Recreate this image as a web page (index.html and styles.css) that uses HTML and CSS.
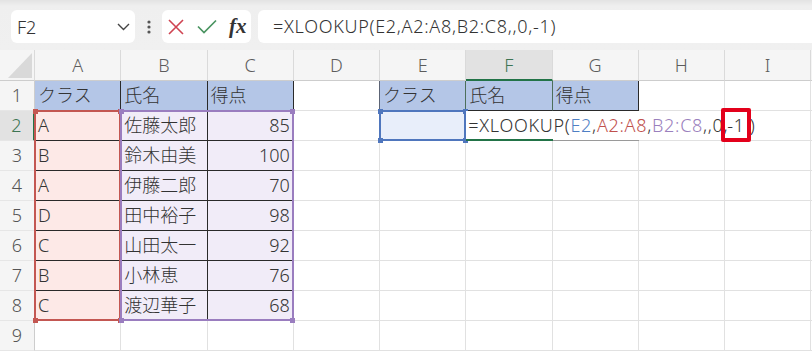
FILE: index.html
```html
<!DOCTYPE html>
<html lang="ja">
  <head>
    <meta charset="UTF-8" />
    <meta name="viewport" content="width=device-width, initial-scale=1.0" />
    <title>XLOOKUP</title>
    <link rel="stylesheet" href="styles.css">
  </head>
  <body>
    <div class="toolbar">
      <div class="namebox">
        <span>F2</span>
        <svg width="13" height="8" viewBox="0 0 13 8"><polyline points="1,1 6.5,6.5 12,1" fill="none" stroke="#444" stroke-width="1.4" /></svg>
      </div>
      <div class="dots">
        <svg width="4" height="14" viewBox="0 0 4 14"><circle cx="2" cy="2" r="1.6" fill="#555" /><circle cx="2" cy="7" r="1.6" fill="#555" /><circle cx="2" cy="12" r="1.6" fill="#555" /></svg>
      </div>
      <div class="fbtns">
        <svg width="16" height="16" viewBox="0 0 16 16"><path d="M1 1 L15 15 M15 1 L1 15" stroke="#cf4452" stroke-width="1.6" fill="none" /></svg>
        <svg width="20" height="15" viewBox="0 0 20 15"><polyline points="1,7.5 7,13.5 19,1.5" fill="none" stroke="#4a9461" stroke-width="1.7" /></svg>
        <span class="fx">fx</span>
      </div>
      <div class="formula">=XLOOKUP(E2,A2:A8,B2:C8,,0,-1)</div>
    </div>

    <div class="sheet-wrap">
      <div class="sheet">
        <!-- column headers -->
        <div class="c ch corner"><svg width="24" height="25" viewBox="0 0 24 25"><polygon points="24,0 24,25 0,25" fill="#d9d9d9" /></svg></div>
        <div class="c ch">A</div>
        <div class="c ch">B</div>
        <div class="c ch">C</div>
        <div class="c ch">D</div>
        <div class="c ch">E</div>
        <div class="c ch on">F</div>
        <div class="c ch">G</div>
        <div class="c ch">H</div>
        <div class="c ch">I</div>
        <div class="c ch"></div>

        <!-- row 1 -->
        <div class="c rh">1</div>
        <div class="c t hd">クラス</div>
        <div class="c t hd">氏名</div>
        <div class="c t hd">得点</div>
        <div class="c edge"></div>
        <div class="c t hd gr">クラス</div>
        <div class="c t hd gr">氏名</div>
        <div class="c t hd">得点</div>
        <div class="c"></div>
        <div class="c"></div>
        <div class="c"></div>

        <!-- row 2 -->
        <div class="c rh on">2</div>
        <div class="c t pa">A</div>
        <div class="c t pb">佐藤太郎</div>
        <div class="c t pb num">85</div>
        <div class="c"></div>
        <div class="c pe"></div>
        <div class="c"></div>
        <div class="c"></div>
        <div class="c"></div>
        <div class="c"></div>
        <div class="c"></div>

        <!-- row 3 -->
        <div class="c rh">3</div>
        <div class="c t pa">B</div>
        <div class="c t pb">鈴木由美</div>
        <div class="c t pb num">100</div>
        <div class="c"></div>
        <div class="c"></div>
        <div class="c"></div>
        <div class="c"></div>
        <div class="c"></div>
        <div class="c"></div>
        <div class="c"></div>

        <!-- row 4 -->
        <div class="c rh">4</div>
        <div class="c t pa">A</div>
        <div class="c t pb">伊藤二郎</div>
        <div class="c t pb num">70</div>
        <div class="c"></div>
        <div class="c"></div>
        <div class="c"></div>
        <div class="c"></div>
        <div class="c"></div>
        <div class="c"></div>
        <div class="c"></div>

        <!-- row 5 -->
        <div class="c rh">5</div>
        <div class="c t pa">D</div>
        <div class="c t pb">田中裕子</div>
        <div class="c t pb num">98</div>
        <div class="c"></div>
        <div class="c"></div>
        <div class="c"></div>
        <div class="c"></div>
        <div class="c"></div>
        <div class="c"></div>
        <div class="c"></div>

        <!-- row 6 -->
        <div class="c rh">6</div>
        <div class="c t pa">C</div>
        <div class="c t pb">山田太一</div>
        <div class="c t pb num">92</div>
        <div class="c"></div>
        <div class="c"></div>
        <div class="c"></div>
        <div class="c"></div>
        <div class="c"></div>
        <div class="c"></div>
        <div class="c"></div>

        <!-- row 7 -->
        <div class="c rh">7</div>
        <div class="c t pa">B</div>
        <div class="c t pb">小林恵</div>
        <div class="c t pb num">76</div>
        <div class="c"></div>
        <div class="c"></div>
        <div class="c"></div>
        <div class="c"></div>
        <div class="c"></div>
        <div class="c"></div>
        <div class="c"></div>

        <!-- row 8 -->
        <div class="c rh">8</div>
        <div class="c t pa">C</div>
        <div class="c t pb">渡辺華子</div>
        <div class="c t pb num">68</div>
        <div class="c"></div>
        <div class="c"></div>
        <div class="c"></div>
        <div class="c"></div>
        <div class="c"></div>
        <div class="c"></div>
        <div class="c"></div>

        <!-- row 9 -->
        <div class="c rh">9</div>
        <div class="c"></div>
        <div class="c"></div>
        <div class="c"></div>
        <div class="c"></div>
        <div class="c"></div>
        <div class="c"></div>
        <div class="c"></div>
        <div class="c"></div>
        <div class="c"></div>
        <div class="c"></div>
      </div>

      <!-- reference highlights and the cell being edited -->
      <div class="layer">
        <div class="rng rng-a"><i class="h tl"></i><i class="h tr"></i><i class="h bl"></i><i class="h br"></i></div>
        <div class="rng rng-b"><i class="h tl"></i><i class="h tr"></i><i class="h bl"></i><i class="h br"></i></div>
        <div class="rng rng-e"><i class="h tl"></i><i class="h tr"></i><i class="h bl"></i><i class="h br"></i></div>
        <div class="edit">=XLOOKUP(<span class="r-e">E2</span>,<span class="r-a">A2:A8</span>,<span class="r-b">B2:C8</span>,,0,<span class="mark">-1</span>)</div>
      </div>
    </div>
  </body>
</html>
```

FILE: styles.css
```css
body {
  margin: 0;
  background-color: #ffffff;
  font-family: "Noto Sans", "Noto Sans CJK JP", sans-serif;
  color: #333;
  overflow: hidden;
}

/* formula bar */

.toolbar {
  height: 50px;
  box-sizing: border-box;
  display: flex;
  align-items: flex-start;
  padding: 10px 0 0 11px;
  background: linear-gradient(#e3e3e3 0, #efefef 6px, #f0f0f0 100%);
}

.namebox {
  width: 124px;
  height: 33px;
  box-sizing: border-box;
  display: flex;
  align-items: center;
  justify-content: space-between;
  padding: 0 5px 0 6px;
  background: #fff;
  border-radius: 6px;
  font-size: 18px;
  font-weight: 300;
  color: #333;
}

.dots {
  width: 27px;
  height: 33px;
  display: flex;
  align-items: center;
  justify-content: center;
}

.fbtns {
  width: 89px;
  height: 33px;
  box-sizing: border-box;
  display: flex;
  align-items: center;
  gap: 13px;
  padding-left: 6px;
  background: #fff;
  border-radius: 6px;
}

.fx {
  font-family: "Liberation Serif", "DejaVu Serif", serif;
  font-style: italic;
  font-weight: bold;
  font-size: 21px;
  color: #333;
  line-height: 33px;
  margin-left: -1px;
}

.formula {
  flex: 1;
  height: 33px;
  margin-left: 7px;
  padding-left: 15px;
  background: #fff;
  border-radius: 6px 0 0 6px;
  font-size: 18px;
  font-weight: 300;
  letter-spacing: 0.7px;
  line-height: 33px;
  color: #333;
  white-space: nowrap;
}

/* grid */

.sheet-wrap {
  position: relative;
  height: 301px;
  overflow: hidden;
}

.sheet,
.layer {
  display: grid;
  grid-template-columns: 35px repeat(10, 86.25px);
  grid-template-rows: 31px repeat(9, 30px);
}

.sheet {
  font-size: 18px;
  font-weight: 300;
}

.c {
  box-sizing: border-box;
  border-right: 1px solid #e1e1e1;
  border-bottom: 1px solid #e1e1e1;
  padding: 0 3px 0 3px;
  line-height: 29px;
  white-space: nowrap;
  overflow: hidden;
}

.ch {
  background: #f5f5f5;
  border-right-color: #dadada;
  border-bottom-color: #cdcdcd;
  text-align: center;
  font-size: 18px;
  line-height: 31px;
  color: #5c5c5c;
}

.ch.on {
  background: #e2e2e2;
  color: #3d7553;
  border-bottom: 2px solid #227347;
}

.corner {
  position: relative;
  padding: 0;
}

.corner svg {
  position: absolute;
  right: 2px;
  bottom: 2px;
}

.rh {
  background: #f5f5f5;
  border-right-color: #cdcdcd;
  border-bottom-color: #e6e6e6;
  padding: 0;
  text-align: center;
  color: #555;
}

.rh.on {
  background: #e2e2e2;
  color: #3d7553;
  border-right: 2px solid #227347;
}

.t {
  border-right-color: #2a2a2a;
  border-bottom-color: #2a2a2a;
}

.edge {
  border-right-color: #5c6475;
}

.gr {
  border-right-color: #4d6f5b;
}

.hd {
  background: #b4c6e7;
}

.pa {
  background: #fde9e7;
}

.pb {
  background: #f1ecf8;
}

.pe {
  background: #e8eefa;
}

.num {
  text-align: right;
}

/* overlay layer */

.layer {
  position: absolute;
  top: 0;
  left: 0;
  right: 0;
  bottom: 0;
  pointer-events: none;
}

.rng {
  position: relative;
  margin: -1px 0 0 -1px;
  border: 2px solid currentColor;
}

.rng-a {
  grid-column: 2;
  grid-row: 3 / 10;
  color: #c35752;
}

.rng-b {
  grid-column: 3 / 5;
  grid-row: 3 / 10;
  color: #9a7dbf;
}

.rng-e {
  grid-column: 6;
  grid-row: 3;
  color: #4f76bd;
}

.h {
  position: absolute;
  width: 5px;
  height: 5px;
  background: currentColor;
}

.tl { left: -3.5px; top: -3.5px; }
.tr { right: -3.5px; top: -3.5px; }
.bl { left: -3.5px; bottom: -3.5px; }
.br { right: -3.5px; bottom: -3.5px; }

.edit {
  grid-column: 7 / 9;
  grid-row: 3;
  position: relative;
  box-sizing: border-box;
  background: #fff;
  border-bottom: 1px solid #9a9a9a;
  padding-left: 2px;
  font-size: 18px;
  font-weight: 300;
  letter-spacing: 0.7px;
  line-height: 29px;
  color: #333;
  white-space: nowrap;
}

.edit::after {
  content: "";
  position: absolute;
  left: 0;
  bottom: -1px;
  width: 86.25px;
  height: 2px;
  background: #227347;
}

.r-e { color: #4f7fc4; }
.r-a { color: #c0504d; }
.r-b { color: #9a80bd; }

.mark {
  display: inline-block;
  margin: -4px -1px -4px -7px;
  padding: 0 2px;
  border: 4px solid #e3001b;
  border-radius: 2px;
  line-height: 26px;
}
```
